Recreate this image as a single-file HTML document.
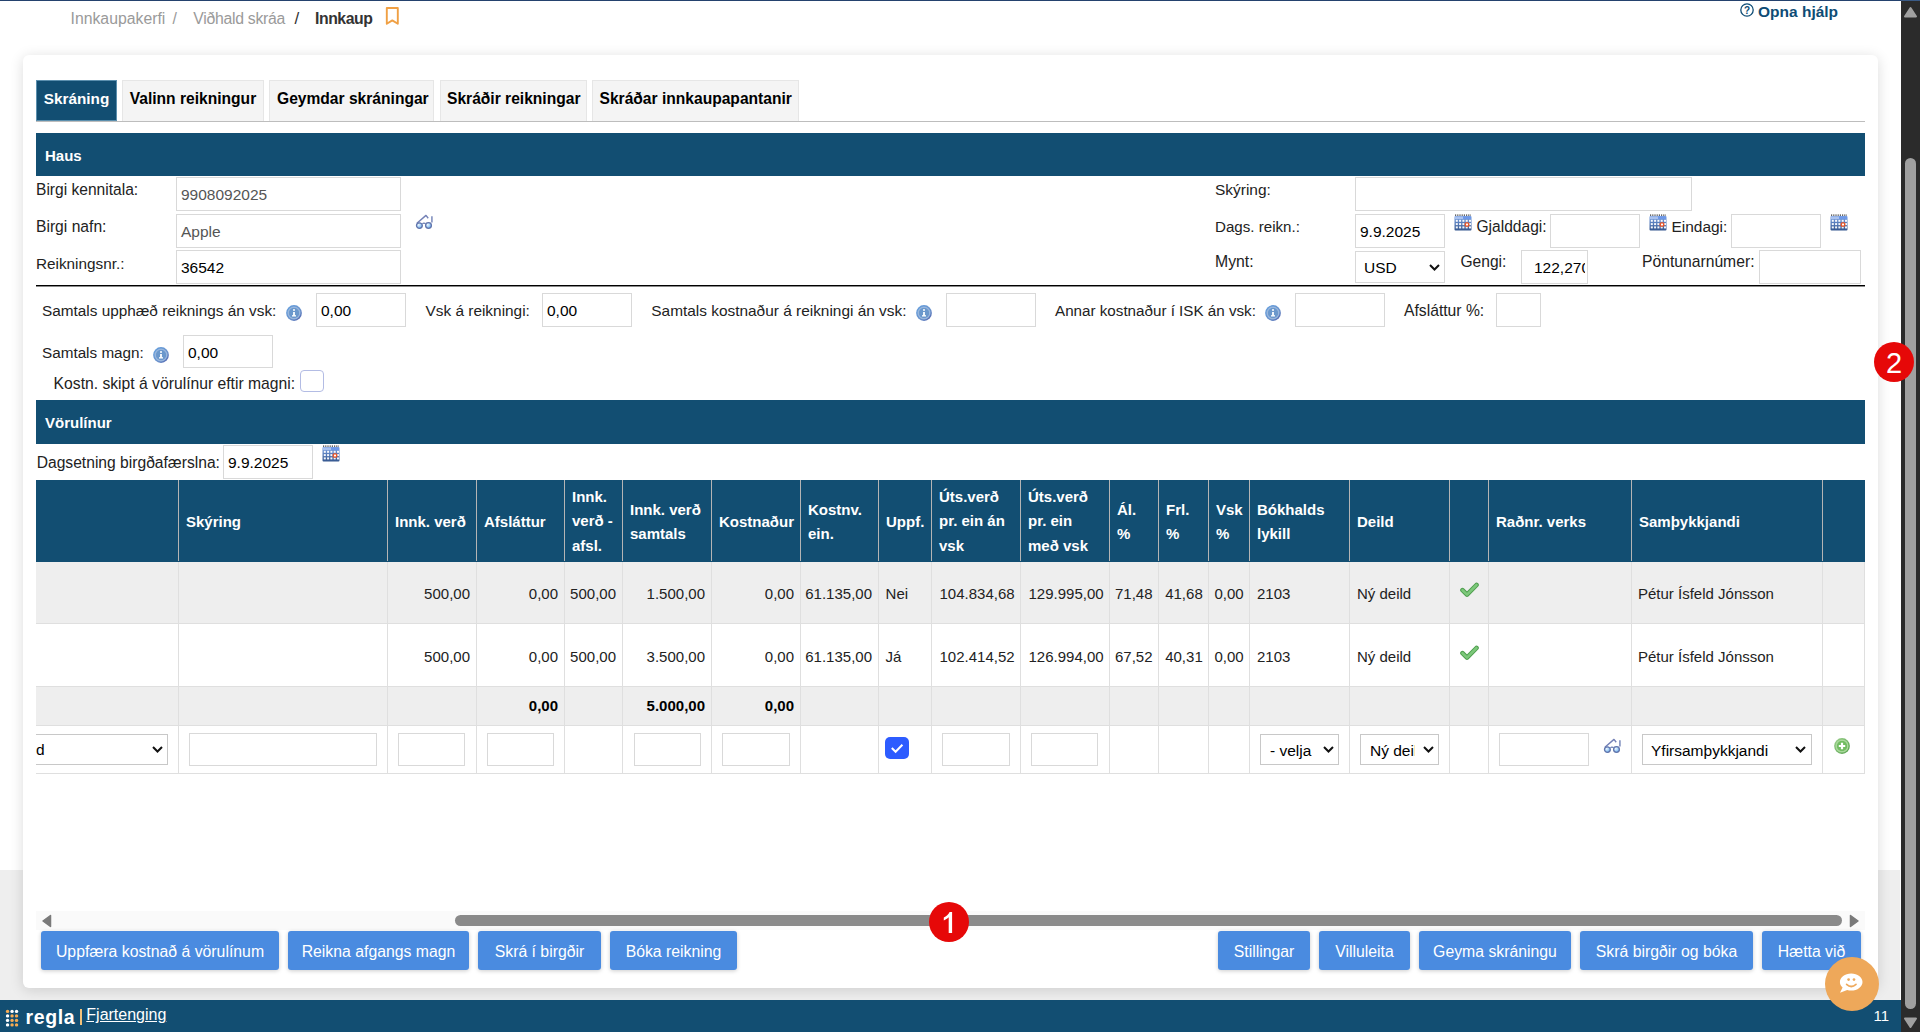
<!DOCTYPE html>
<html><head><meta charset="utf-8"><title>Innkaup</title><style>
html,body{margin:0;padding:0;width:1920px;height:1032px;overflow:hidden;background:#fff;}
body{position:relative;font-family:"Liberation Sans",sans-serif;}
.t{position:absolute;white-space:pre;}
.b{position:absolute;}
.inp{position:absolute;box-sizing:border-box;border:1px solid #d9d9d9;background:#fff;white-space:pre;overflow:hidden;font-family:"Liberation Sans",sans-serif;}
</style></head><body>
<div class="b" style="left:0px;top:870px;width:1900px;height:130px;background:#eeeeee"></div>
<div class="b" style="left:23px;top:55px;width:1855px;height:933px;background:#fff;border-radius:6px;box-shadow:0 2px 14px rgba(0,0,0,0.14)"></div>
<div class="t" style="left:70.5px;top:8.53px;font-size:15.8px;font-weight:400;color:#9a9a9a;line-height:20px;">Innkaupakerfi</div>
<div class="t" style="left:172.5px;top:8.53px;font-size:15.8px;font-weight:400;color:#9a9a9a;line-height:20px;">/</div>
<div class="t" style="left:193.3px;top:8.53px;font-size:15.8px;font-weight:400;color:#9a9a9a;line-height:20px;letter-spacing:-0.28px">Viðhald skráa</div>
<div class="t" style="left:294.5px;top:8.61px;font-size:17px;font-weight:400;color:#333;line-height:20px;">/</div>
<div class="t" style="left:315px;top:8.53px;font-size:15.8px;font-weight:700;color:#333;line-height:20px;letter-spacing:-0.45px">Innkaup</div>
<svg class="b" style="left:384px;top:6px" width="17" height="21" viewBox="0 0 17 21"><path d="M2.8 2 H13.8 V17.8 L8.3 14.4 L2.8 17.8 Z" fill="none" stroke="#f0a044" stroke-width="1.9" stroke-linejoin="round"/></svg>
<svg class="b" style="left:1740px;top:3px" width="15" height="15" viewBox="0 0 15 15"><circle cx="7" cy="7" r="6.2" fill="none" stroke="#0e4c75" stroke-width="1.3"/><text x="7" y="11" text-anchor="middle" font-family="Liberation Sans" font-weight="700" font-size="10" fill="#0e4c75">?</text></svg>
<div class="t" style="left:1758px;top:2.03px;font-size:15.5px;font-weight:700;color:#0e4c75;line-height:20px;">Opna hjálp</div>
<div class="b" style="left:36px;top:121px;width:1829px;height:1px;background:#bdbdbd"></div>
<div class="b" style="left:36px;top:80px;width:81px;height:41px;background:#124e72;border:1px solid #5b8fae;box-sizing:border-box"></div>
<div class="t" style="left:43.8px;top:88.70px;font-size:15.3px;font-weight:700;color:#fff;line-height:20px;">Skráning</div>
<div class="b" style="left:122px;top:80px;width:142px;height:41px;background:#f4f4f4;border:1px solid #e6e6e6;border-bottom:none;box-sizing:border-box"></div>
<div class="t" style="left:129.7px;top:88.59px;font-size:15.6px;font-weight:700;color:#000;line-height:20px;">Valinn reikningur</div>
<div class="b" style="left:269px;top:80px;width:165px;height:41px;background:#f4f4f4;border:1px solid #e6e6e6;border-bottom:none;box-sizing:border-box"></div>
<div class="t" style="left:277px;top:88.59px;font-size:15.6px;font-weight:700;color:#000;line-height:20px;">Geymdar skráningar</div>
<div class="b" style="left:440px;top:80px;width:147px;height:41px;background:#f4f4f4;border:1px solid #e6e6e6;border-bottom:none;box-sizing:border-box"></div>
<div class="t" style="left:447px;top:88.59px;font-size:15.6px;font-weight:700;color:#000;line-height:20px;">Skráðir reikningar</div>
<div class="b" style="left:592px;top:80px;width:207px;height:41px;background:#f4f4f4;border:1px solid #e6e6e6;border-bottom:none;box-sizing:border-box"></div>
<div class="t" style="left:599.5px;top:88.59px;font-size:15.6px;font-weight:700;color:#000;line-height:20px;">Skráðar innkaupapantanir</div>
<div class="b" style="left:36px;top:133px;width:1829px;height:43px;background:#124e72"></div>
<div class="t" style="left:45px;top:145.80px;font-size:15px;font-weight:700;color:#fff;line-height:20px;">Haus</div>
<div class="t" style="left:36px;top:179.60px;font-size:15.59px;font-weight:400;color:#222;line-height:20px;">Birgi kennitala:</div>
<div class="inp" style="left:176px;top:177px;width:225px;height:34px;line-height:34px;font-size:15.5px;color:#555;padding-left:4px;text-align:left;">9908092025</div>
<div class="t" style="left:36px;top:216.58px;font-size:15.65px;font-weight:400;color:#222;line-height:20px;">Birgi nafn:</div>
<div class="inp" style="left:176px;top:214px;width:225px;height:34px;line-height:34px;font-size:15.5px;color:#555;padding-left:4px;text-align:left;">Apple</div>
<div class="t" style="left:36px;top:253.70px;font-size:15.31px;font-weight:400;color:#222;line-height:20px;">Reikningsnr.:</div>
<div class="inp" style="left:176px;top:250px;width:225px;height:34px;line-height:34px;font-size:15.5px;color:#000;padding-left:4px;text-align:left;">36542</div>
<svg class="b" style="left:415px;top:214px" width="19" height="16" viewBox="0 0 19 16"><defs><radialGradient id="lg1" cx="0.35" cy="0.35" r="0.75"><stop offset="0" stop-color="#f0f9ff"/><stop offset="1" stop-color="#5aa6ec"/></radialGradient></defs><path d="M1.9 9.2 L11 1.4 L13.2 4.2" fill="none" stroke="#7380b6" stroke-width="1.4" stroke-linejoin="round"/><path d="M16.9 2.2 V8.6" stroke="#8f9cc6" stroke-width="1.8"/><ellipse cx="4.4" cy="11.6" rx="2.9" ry="2.8" fill="url(#lg1)" stroke="#6275ac" stroke-width="1.3"/><ellipse cx="13.5" cy="11.5" rx="2.9" ry="2.8" fill="url(#lg1)" stroke="#6275ac" stroke-width="1.3"/><path d="M7.3 9.6 Q9 8.6 10.6 9.6" fill="none" stroke="#6275ac" stroke-width="1.1"/></svg>
<div class="t" style="left:1215px;top:180.14px;font-size:15.47px;font-weight:400;color:#222;line-height:20px;">Skýring:</div>
<div class="inp" style="left:1355px;top:177px;width:337px;height:34px;line-height:34px;font-size:15.5px;color:#000;padding-left:4px;text-align:left;"></div>
<div class="t" style="left:1215px;top:216.75px;font-size:15.14px;font-weight:400;color:#222;line-height:20px;">Dags. reikn.:</div>
<div class="inp" style="left:1355px;top:214px;width:90px;height:34px;line-height:34px;font-size:15.5px;color:#000;padding-left:4px;text-align:left;">9.9.2025</div>
<svg class="b" style="left:1454px;top:214px" width="18" height="17" viewBox="0 0 18 17"><defs><linearGradient id="cg1" x1="0" y1="0" x2="0" y2="1"><stop offset="0" stop-color="#7ba3e6"/><stop offset="1" stop-color="#35578f"/></linearGradient></defs><rect x="0.5" y="2" width="17" height="14.5" rx="1" fill="url(#cg1)"/><rect x="1" y="2.5" width="8" height="2.6" fill="#a9c2f0"/><rect x="9" y="2.5" width="8" height="2.6" fill="#6e98e8"/><path d="M1 1.2 H17" stroke="#333" stroke-width="1.2" stroke-dasharray="1.2 1"/><rect x="1.8" y="5.8" width="2" height="2" fill="#fff" opacity="0.95"/><rect x="5.1" y="5.8" width="2" height="2" fill="#fff" opacity="0.95"/><rect x="8.4" y="5.8" width="2" height="2" fill="#fff" opacity="0.95"/><rect x="11.7" y="5.8" width="2" height="2" fill="#fff" opacity="0.95"/><rect x="15.0" y="5.8" width="2" height="2" fill="#fff" opacity="0.95"/><rect x="1.8" y="9.1" width="2" height="2" fill="#fff" opacity="0.95"/><rect x="5.1" y="9.1" width="2" height="2" fill="#fff" opacity="0.95"/><rect x="8.4" y="9.1" width="2" height="2" fill="#fff" opacity="0.95"/><rect x="11.7" y="9.1" width="2" height="2" fill="#fff" opacity="0.95"/><rect x="15.0" y="9.1" width="2" height="2" fill="#fff" opacity="0.95"/><rect x="1.8" y="12.4" width="2" height="2" fill="#fff" opacity="0.95"/><rect x="5.1" y="12.4" width="2" height="2" fill="#fff" opacity="0.95"/><rect x="8.4" y="12.4" width="2" height="2" fill="#fff" opacity="0.95"/><rect x="11.7" y="12.4" width="2" height="2" fill="#fff" opacity="0.95"/><rect x="15.0" y="12.4" width="2" height="2" fill="#fff" opacity="0.95"/><rect x="10.6" y="8.2" width="4.8" height="4.6" rx="1.6" fill="#e8572a"/><rect x="12" y="9.6" width="2" height="1.8" fill="#fff"/></svg>
<div class="t" style="left:1476.5px;top:216.60px;font-size:15.57px;font-weight:400;color:#222;line-height:20px;">Gjalddagi:</div>
<div class="inp" style="left:1550px;top:214px;width:90px;height:34px;line-height:34px;font-size:15.5px;color:#000;padding-left:4px;text-align:left;"></div>
<svg class="b" style="left:1649px;top:214px" width="18" height="17" viewBox="0 0 18 17"><defs><linearGradient id="cg2" x1="0" y1="0" x2="0" y2="1"><stop offset="0" stop-color="#7ba3e6"/><stop offset="1" stop-color="#35578f"/></linearGradient></defs><rect x="0.5" y="2" width="17" height="14.5" rx="1" fill="url(#cg2)"/><rect x="1" y="2.5" width="8" height="2.6" fill="#a9c2f0"/><rect x="9" y="2.5" width="8" height="2.6" fill="#6e98e8"/><path d="M1 1.2 H17" stroke="#333" stroke-width="1.2" stroke-dasharray="1.2 1"/><rect x="1.8" y="5.8" width="2" height="2" fill="#fff" opacity="0.95"/><rect x="5.1" y="5.8" width="2" height="2" fill="#fff" opacity="0.95"/><rect x="8.4" y="5.8" width="2" height="2" fill="#fff" opacity="0.95"/><rect x="11.7" y="5.8" width="2" height="2" fill="#fff" opacity="0.95"/><rect x="15.0" y="5.8" width="2" height="2" fill="#fff" opacity="0.95"/><rect x="1.8" y="9.1" width="2" height="2" fill="#fff" opacity="0.95"/><rect x="5.1" y="9.1" width="2" height="2" fill="#fff" opacity="0.95"/><rect x="8.4" y="9.1" width="2" height="2" fill="#fff" opacity="0.95"/><rect x="11.7" y="9.1" width="2" height="2" fill="#fff" opacity="0.95"/><rect x="15.0" y="9.1" width="2" height="2" fill="#fff" opacity="0.95"/><rect x="1.8" y="12.4" width="2" height="2" fill="#fff" opacity="0.95"/><rect x="5.1" y="12.4" width="2" height="2" fill="#fff" opacity="0.95"/><rect x="8.4" y="12.4" width="2" height="2" fill="#fff" opacity="0.95"/><rect x="11.7" y="12.4" width="2" height="2" fill="#fff" opacity="0.95"/><rect x="15.0" y="12.4" width="2" height="2" fill="#fff" opacity="0.95"/><rect x="10.6" y="8.2" width="4.8" height="4.6" rx="1.6" fill="#e8572a"/><rect x="12" y="9.6" width="2" height="1.8" fill="#fff"/></svg>
<div class="t" style="left:1671.5px;top:216.64px;font-size:15.46px;font-weight:400;color:#222;line-height:20px;">Eindagi:</div>
<div class="inp" style="left:1731px;top:214px;width:90px;height:34px;line-height:34px;font-size:15.5px;color:#000;padding-left:4px;text-align:left;"></div>
<svg class="b" style="left:1829.5px;top:214px" width="18" height="17" viewBox="0 0 18 17"><defs><linearGradient id="cg3" x1="0" y1="0" x2="0" y2="1"><stop offset="0" stop-color="#7ba3e6"/><stop offset="1" stop-color="#35578f"/></linearGradient></defs><rect x="0.5" y="2" width="17" height="14.5" rx="1" fill="url(#cg3)"/><rect x="1" y="2.5" width="8" height="2.6" fill="#a9c2f0"/><rect x="9" y="2.5" width="8" height="2.6" fill="#6e98e8"/><path d="M1 1.2 H17" stroke="#333" stroke-width="1.2" stroke-dasharray="1.2 1"/><rect x="1.8" y="5.8" width="2" height="2" fill="#fff" opacity="0.95"/><rect x="5.1" y="5.8" width="2" height="2" fill="#fff" opacity="0.95"/><rect x="8.4" y="5.8" width="2" height="2" fill="#fff" opacity="0.95"/><rect x="11.7" y="5.8" width="2" height="2" fill="#fff" opacity="0.95"/><rect x="15.0" y="5.8" width="2" height="2" fill="#fff" opacity="0.95"/><rect x="1.8" y="9.1" width="2" height="2" fill="#fff" opacity="0.95"/><rect x="5.1" y="9.1" width="2" height="2" fill="#fff" opacity="0.95"/><rect x="8.4" y="9.1" width="2" height="2" fill="#fff" opacity="0.95"/><rect x="11.7" y="9.1" width="2" height="2" fill="#fff" opacity="0.95"/><rect x="15.0" y="9.1" width="2" height="2" fill="#fff" opacity="0.95"/><rect x="1.8" y="12.4" width="2" height="2" fill="#fff" opacity="0.95"/><rect x="5.1" y="12.4" width="2" height="2" fill="#fff" opacity="0.95"/><rect x="8.4" y="12.4" width="2" height="2" fill="#fff" opacity="0.95"/><rect x="11.7" y="12.4" width="2" height="2" fill="#fff" opacity="0.95"/><rect x="15.0" y="12.4" width="2" height="2" fill="#fff" opacity="0.95"/><rect x="10.6" y="8.2" width="4.8" height="4.6" rx="1.6" fill="#e8572a"/><rect x="12" y="9.6" width="2" height="1.8" fill="#fff"/></svg>
<div class="t" style="left:1215px;top:252.03px;font-size:15.8px;font-weight:400;color:#222;line-height:20px;">Mynt:</div>
<div class="inp" style="left:1355px;top:251px;width:90px;height:32px;line-height:32px;font-size:15.5px;color:#000;padding-left:8px;">USD</div>
<svg class="b" style="left:1429px;top:264px" width="11" height="7" viewBox="0 0 11 7"><path d="M1 1 L5.5 5.5 L10 1" fill="none" stroke="#111" stroke-width="2"/></svg>
<div class="t" style="left:1460.5px;top:252.10px;font-size:15.58px;font-weight:400;color:#222;line-height:20px;">Gengi:</div>
<div class="inp" style="left:1521px;top:250px;width:67px;height:34px;line-height:34px;font-size:15.5px;color:#000;padding-left:12px;"><span style="display:inline-block;width:51px;overflow:hidden;vertical-align:top">122,270</span></div>
<div class="t" style="left:1642px;top:252.06px;font-size:15.69px;font-weight:400;color:#222;line-height:20px;">Pöntunarnúmer:</div>
<div class="inp" style="left:1759px;top:250px;width:102px;height:34px;line-height:34px;font-size:15.5px;color:#000;padding-left:4px;text-align:left;"></div>
<div class="b" style="left:36px;top:285px;width:1829px;height:1px;background:#000"></div>
<div class="b" style="left:36px;top:286px;width:1829px;height:1px;background:#8a8a8a"></div>
<div class="t" style="left:42px;top:301.18px;font-size:15.34px;font-weight:400;color:#222;line-height:20px;">Samtals upphæð reiknings án vsk:</div>
<svg class="b" style="left:286px;top:305px" width="16" height="16" viewBox="0 0 16 16"><defs><linearGradient id="ig1" x1="0" y1="0" x2="1" y2="1"><stop offset="0" stop-color="#62a0e0"/><stop offset="0.6" stop-color="#6a92cc"/><stop offset="1" stop-color="#4a5aa8"/></linearGradient></defs><circle cx="8" cy="8" r="7.9" fill="url(#ig1)"/><circle cx="8" cy="8" r="5.7" fill="none" stroke="#98b6dc" stroke-width="1.6"/><circle cx="8" cy="8" r="4.9" fill="#6b98cc"/><circle cx="8" cy="5" r="1" fill="#fff"/><rect x="7.1" y="7" width="1.8" height="3.8" fill="#fff"/><rect x="6" y="10.2" width="4" height="1.3" fill="#fff"/></svg>
<div class="inp" style="left:316px;top:293px;width:90px;height:34px;line-height:34px;font-size:15.5px;color:#000;padding-left:4px;text-align:left;">0,00</div>
<div class="t" style="left:425.5px;top:301.16px;font-size:15.4px;font-weight:400;color:#222;line-height:20px;">Vsk á reikningi:</div>
<div class="inp" style="left:542px;top:293px;width:90px;height:34px;line-height:34px;font-size:15.5px;color:#000;padding-left:4px;text-align:left;">0,00</div>
<div class="t" style="left:651.3px;top:301.16px;font-size:15.41px;font-weight:400;color:#222;line-height:20px;">Samtals kostnaður á reikningi án vsk:</div>
<svg class="b" style="left:916px;top:305px" width="16" height="16" viewBox="0 0 16 16"><defs><linearGradient id="ig2" x1="0" y1="0" x2="1" y2="1"><stop offset="0" stop-color="#62a0e0"/><stop offset="0.6" stop-color="#6a92cc"/><stop offset="1" stop-color="#4a5aa8"/></linearGradient></defs><circle cx="8" cy="8" r="7.9" fill="url(#ig2)"/><circle cx="8" cy="8" r="5.7" fill="none" stroke="#98b6dc" stroke-width="1.6"/><circle cx="8" cy="8" r="4.9" fill="#6b98cc"/><circle cx="8" cy="5" r="1" fill="#fff"/><rect x="7.1" y="7" width="1.8" height="3.8" fill="#fff"/><rect x="6" y="10.2" width="4" height="1.3" fill="#fff"/></svg>
<div class="inp" style="left:946px;top:293px;width:90px;height:34px;line-height:34px;font-size:15.5px;color:#000;padding-left:4px;text-align:left;"></div>
<div class="t" style="left:1055px;top:301.24px;font-size:15.19px;font-weight:400;color:#222;line-height:20px;">Annar kostnaður í ISK án vsk:</div>
<svg class="b" style="left:1265px;top:305px" width="16" height="16" viewBox="0 0 16 16"><defs><linearGradient id="ig3" x1="0" y1="0" x2="1" y2="1"><stop offset="0" stop-color="#62a0e0"/><stop offset="0.6" stop-color="#6a92cc"/><stop offset="1" stop-color="#4a5aa8"/></linearGradient></defs><circle cx="8" cy="8" r="7.9" fill="url(#ig3)"/><circle cx="8" cy="8" r="5.7" fill="none" stroke="#98b6dc" stroke-width="1.6"/><circle cx="8" cy="8" r="4.9" fill="#6b98cc"/><circle cx="8" cy="5" r="1" fill="#fff"/><rect x="7.1" y="7" width="1.8" height="3.8" fill="#fff"/><rect x="6" y="10.2" width="4" height="1.3" fill="#fff"/></svg>
<div class="inp" style="left:1295px;top:293px;width:90px;height:34px;line-height:34px;font-size:15.5px;color:#000;padding-left:4px;text-align:left;"></div>
<div class="t" style="left:1404px;top:301.06px;font-size:15.7px;font-weight:400;color:#222;line-height:20px;">Afsláttur %:</div>
<div class="inp" style="left:1496px;top:293px;width:45px;height:34px;line-height:34px;font-size:15.5px;color:#000;padding-left:4px;text-align:left;"></div>
<div class="t" style="left:42px;top:342.71px;font-size:15.28px;font-weight:400;color:#222;line-height:20px;">Samtals magn:</div>
<svg class="b" style="left:153px;top:347px" width="16" height="16" viewBox="0 0 16 16"><defs><linearGradient id="ig4" x1="0" y1="0" x2="1" y2="1"><stop offset="0" stop-color="#62a0e0"/><stop offset="0.6" stop-color="#6a92cc"/><stop offset="1" stop-color="#4a5aa8"/></linearGradient></defs><circle cx="8" cy="8" r="7.9" fill="url(#ig4)"/><circle cx="8" cy="8" r="5.7" fill="none" stroke="#98b6dc" stroke-width="1.6"/><circle cx="8" cy="8" r="4.9" fill="#6b98cc"/><circle cx="8" cy="5" r="1" fill="#fff"/><rect x="7.1" y="7" width="1.8" height="3.8" fill="#fff"/><rect x="6" y="10.2" width="4" height="1.3" fill="#fff"/></svg>
<div class="inp" style="left:183px;top:335px;width:90px;height:33px;line-height:33px;font-size:15.5px;color:#000;padding-left:4px;text-align:left;">0,00</div>
<div class="t" style="left:53.6px;top:373.56px;font-size:15.7px;font-weight:400;color:#222;line-height:20px;">Kostn. skipt á vörulínur eftir magni:</div>
<div class="b" style="left:300px;top:370px;width:24px;height:22px;border:1px solid #b3bce4;border-radius:4px;box-sizing:border-box;background:#fff"></div>
<div class="b" style="left:36px;top:400px;width:1829px;height:43.5px;background:#124e72"></div>
<div class="t" style="left:45px;top:412.80px;font-size:15px;font-weight:700;color:#fff;line-height:20px;">Vörulínur</div>
<div class="t" style="left:36.7px;top:452.88px;font-size:15.63px;font-weight:400;color:#222;line-height:20px;">Dagsetning birgðafærslna:</div>
<div class="inp" style="left:223px;top:445px;width:90px;height:34px;line-height:34px;font-size:15.5px;color:#000;padding-left:4px;text-align:left;">9.9.2025</div>
<svg class="b" style="left:322px;top:445px" width="18" height="17" viewBox="0 0 18 17"><defs><linearGradient id="cg4" x1="0" y1="0" x2="0" y2="1"><stop offset="0" stop-color="#7ba3e6"/><stop offset="1" stop-color="#35578f"/></linearGradient></defs><rect x="0.5" y="2" width="17" height="14.5" rx="1" fill="url(#cg4)"/><rect x="1" y="2.5" width="8" height="2.6" fill="#a9c2f0"/><rect x="9" y="2.5" width="8" height="2.6" fill="#6e98e8"/><path d="M1 1.2 H17" stroke="#333" stroke-width="1.2" stroke-dasharray="1.2 1"/><rect x="1.8" y="5.8" width="2" height="2" fill="#fff" opacity="0.95"/><rect x="5.1" y="5.8" width="2" height="2" fill="#fff" opacity="0.95"/><rect x="8.4" y="5.8" width="2" height="2" fill="#fff" opacity="0.95"/><rect x="11.7" y="5.8" width="2" height="2" fill="#fff" opacity="0.95"/><rect x="15.0" y="5.8" width="2" height="2" fill="#fff" opacity="0.95"/><rect x="1.8" y="9.1" width="2" height="2" fill="#fff" opacity="0.95"/><rect x="5.1" y="9.1" width="2" height="2" fill="#fff" opacity="0.95"/><rect x="8.4" y="9.1" width="2" height="2" fill="#fff" opacity="0.95"/><rect x="11.7" y="9.1" width="2" height="2" fill="#fff" opacity="0.95"/><rect x="15.0" y="9.1" width="2" height="2" fill="#fff" opacity="0.95"/><rect x="1.8" y="12.4" width="2" height="2" fill="#fff" opacity="0.95"/><rect x="5.1" y="12.4" width="2" height="2" fill="#fff" opacity="0.95"/><rect x="8.4" y="12.4" width="2" height="2" fill="#fff" opacity="0.95"/><rect x="11.7" y="12.4" width="2" height="2" fill="#fff" opacity="0.95"/><rect x="15.0" y="12.4" width="2" height="2" fill="#fff" opacity="0.95"/><rect x="10.6" y="8.2" width="4.8" height="4.6" rx="1.6" fill="#e8572a"/><rect x="12" y="9.6" width="2" height="1.8" fill="#fff"/></svg>
<div class="b" style="left:36px;top:480px;width:1829px;height:82px;background:#124e72"></div>
<div class="b" style="left:36px;top:562px;width:1829px;height:62px;background:#eeeeee"></div>
<div class="b" style="left:36px;top:624px;width:1829px;height:62px;background:#ffffff"></div>
<div class="b" style="left:36px;top:686px;width:1829px;height:40px;background:#eeeeee"></div>
<div class="b" style="left:36px;top:726px;width:1829px;height:47px;background:#ffffff"></div>
<div class="b" style="left:36px;top:623px;width:1829px;height:1px;background:#dfdfdf"></div>
<div class="b" style="left:36px;top:686px;width:1829px;height:1px;background:#dfdfdf"></div>
<div class="b" style="left:36px;top:725px;width:1829px;height:1px;background:#dfdfdf"></div>
<div class="b" style="left:36px;top:773px;width:1829px;height:1px;background:#dfdfdf"></div>
<div class="b" style="left:178px;top:480px;width:1px;height:81px;background:#b4b4b4"></div>
<div class="b" style="left:178px;top:562px;width:1px;height:212px;background:#dfdfdf"></div>
<div class="b" style="left:387px;top:480px;width:1px;height:81px;background:#b4b4b4"></div>
<div class="b" style="left:387px;top:562px;width:1px;height:212px;background:#dfdfdf"></div>
<div class="b" style="left:476px;top:480px;width:1px;height:81px;background:#b4b4b4"></div>
<div class="b" style="left:476px;top:562px;width:1px;height:212px;background:#dfdfdf"></div>
<div class="b" style="left:564px;top:480px;width:1px;height:81px;background:#b4b4b4"></div>
<div class="b" style="left:564px;top:562px;width:1px;height:212px;background:#dfdfdf"></div>
<div class="b" style="left:622px;top:480px;width:1px;height:81px;background:#b4b4b4"></div>
<div class="b" style="left:622px;top:562px;width:1px;height:212px;background:#dfdfdf"></div>
<div class="b" style="left:711px;top:480px;width:1px;height:81px;background:#b4b4b4"></div>
<div class="b" style="left:711px;top:562px;width:1px;height:212px;background:#dfdfdf"></div>
<div class="b" style="left:800px;top:480px;width:1px;height:81px;background:#b4b4b4"></div>
<div class="b" style="left:800px;top:562px;width:1px;height:212px;background:#dfdfdf"></div>
<div class="b" style="left:878px;top:480px;width:1px;height:81px;background:#b4b4b4"></div>
<div class="b" style="left:878px;top:562px;width:1px;height:212px;background:#dfdfdf"></div>
<div class="b" style="left:931px;top:480px;width:1px;height:81px;background:#b4b4b4"></div>
<div class="b" style="left:931px;top:562px;width:1px;height:212px;background:#dfdfdf"></div>
<div class="b" style="left:1020px;top:480px;width:1px;height:81px;background:#b4b4b4"></div>
<div class="b" style="left:1020px;top:562px;width:1px;height:212px;background:#dfdfdf"></div>
<div class="b" style="left:1109px;top:480px;width:1px;height:81px;background:#b4b4b4"></div>
<div class="b" style="left:1109px;top:562px;width:1px;height:212px;background:#dfdfdf"></div>
<div class="b" style="left:1158px;top:480px;width:1px;height:81px;background:#b4b4b4"></div>
<div class="b" style="left:1158px;top:562px;width:1px;height:212px;background:#dfdfdf"></div>
<div class="b" style="left:1208px;top:480px;width:1px;height:81px;background:#b4b4b4"></div>
<div class="b" style="left:1208px;top:562px;width:1px;height:212px;background:#dfdfdf"></div>
<div class="b" style="left:1249px;top:480px;width:1px;height:81px;background:#b4b4b4"></div>
<div class="b" style="left:1249px;top:562px;width:1px;height:212px;background:#dfdfdf"></div>
<div class="b" style="left:1349px;top:480px;width:1px;height:81px;background:#b4b4b4"></div>
<div class="b" style="left:1349px;top:562px;width:1px;height:212px;background:#dfdfdf"></div>
<div class="b" style="left:1449px;top:480px;width:1px;height:81px;background:#b4b4b4"></div>
<div class="b" style="left:1449px;top:562px;width:1px;height:212px;background:#dfdfdf"></div>
<div class="b" style="left:1488px;top:480px;width:1px;height:81px;background:#b4b4b4"></div>
<div class="b" style="left:1488px;top:562px;width:1px;height:212px;background:#dfdfdf"></div>
<div class="b" style="left:1631px;top:480px;width:1px;height:81px;background:#b4b4b4"></div>
<div class="b" style="left:1631px;top:562px;width:1px;height:212px;background:#dfdfdf"></div>
<div class="b" style="left:1822px;top:480px;width:1px;height:81px;background:#b4b4b4"></div>
<div class="b" style="left:1822px;top:562px;width:1px;height:212px;background:#dfdfdf"></div>
<div class="b" style="left:1864px;top:562px;width:1px;height:212px;background:#dfdfdf"></div>
<div class="t" style="left:186px;top:511.70px;font-size:15px;font-weight:700;color:#fff;line-height:20px;">Skýring</div>
<div class="t" style="left:395px;top:511.70px;font-size:15px;font-weight:700;color:#fff;line-height:20px;">Innk. verð</div>
<div class="t" style="left:484px;top:511.70px;font-size:15px;font-weight:700;color:#fff;line-height:20px;">Afsláttur</div>
<div class="t" style="left:572px;top:486.60px;font-size:15px;font-weight:700;color:#fff;line-height:20px;">Innk.</div>
<div class="t" style="left:572px;top:511.30px;font-size:15px;font-weight:700;color:#fff;line-height:20px;">verð -</div>
<div class="t" style="left:572px;top:535.70px;font-size:15px;font-weight:700;color:#fff;line-height:20px;">afsl.</div>
<div class="t" style="left:630px;top:499.50px;font-size:15px;font-weight:700;color:#fff;line-height:20px;">Innk. verð</div>
<div class="t" style="left:630px;top:524.20px;font-size:15px;font-weight:700;color:#fff;line-height:20px;">samtals</div>
<div class="t" style="left:719px;top:511.70px;font-size:15px;font-weight:700;color:#fff;line-height:20px;">Kostnaður</div>
<div class="t" style="left:808px;top:499.50px;font-size:15px;font-weight:700;color:#fff;line-height:20px;">Kostnv.</div>
<div class="t" style="left:808px;top:524.20px;font-size:15px;font-weight:700;color:#fff;line-height:20px;">ein.</div>
<div class="t" style="left:886px;top:511.70px;font-size:15px;font-weight:700;color:#fff;line-height:20px;">Uppf.</div>
<div class="t" style="left:939px;top:486.60px;font-size:15px;font-weight:700;color:#fff;line-height:20px;">Úts.verð</div>
<div class="t" style="left:939px;top:511.30px;font-size:15px;font-weight:700;color:#fff;line-height:20px;">pr. ein án</div>
<div class="t" style="left:939px;top:535.70px;font-size:15px;font-weight:700;color:#fff;line-height:20px;">vsk</div>
<div class="t" style="left:1028px;top:486.60px;font-size:15px;font-weight:700;color:#fff;line-height:20px;">Úts.verð</div>
<div class="t" style="left:1028px;top:511.30px;font-size:15px;font-weight:700;color:#fff;line-height:20px;">pr. ein</div>
<div class="t" style="left:1028px;top:535.70px;font-size:15px;font-weight:700;color:#fff;line-height:20px;">með vsk</div>
<div class="t" style="left:1117px;top:499.50px;font-size:15px;font-weight:700;color:#fff;line-height:20px;">Ál.</div>
<div class="t" style="left:1117px;top:524.20px;font-size:15px;font-weight:700;color:#fff;line-height:20px;">%</div>
<div class="t" style="left:1166px;top:499.50px;font-size:15px;font-weight:700;color:#fff;line-height:20px;">Frl.</div>
<div class="t" style="left:1166px;top:524.20px;font-size:15px;font-weight:700;color:#fff;line-height:20px;">%</div>
<div class="t" style="left:1216px;top:499.50px;font-size:15px;font-weight:700;color:#fff;line-height:20px;">Vsk</div>
<div class="t" style="left:1216px;top:524.20px;font-size:15px;font-weight:700;color:#fff;line-height:20px;">%</div>
<div class="t" style="left:1257px;top:499.50px;font-size:15px;font-weight:700;color:#fff;line-height:20px;">Bókhalds</div>
<div class="t" style="left:1257px;top:524.20px;font-size:15px;font-weight:700;color:#fff;line-height:20px;">lykill</div>
<div class="t" style="left:1357px;top:511.70px;font-size:15px;font-weight:700;color:#fff;line-height:20px;">Deild</div>
<div class="t" style="left:1496px;top:511.70px;font-size:15px;font-weight:700;color:#fff;line-height:20px;">Raðnr. verks</div>
<div class="t" style="left:1639px;top:511.70px;font-size:15px;font-weight:700;color:#fff;line-height:20px;">Samþykkjandi</div>
<div class="t" style="left:270px;width:200px;text-align:right;top:583.80px;font-size:15px;font-weight:400;color:#222;line-height:20px">500,00</div>
<div class="t" style="left:358px;width:200px;text-align:right;top:583.80px;font-size:15px;font-weight:400;color:#222;line-height:20px">0,00</div>
<div class="t" style="left:416px;width:200px;text-align:right;top:583.80px;font-size:15px;font-weight:400;color:#222;line-height:20px">500,00</div>
<div class="t" style="left:505px;width:200px;text-align:right;top:583.80px;font-size:15px;font-weight:400;color:#222;line-height:20px">1.500,00</div>
<div class="t" style="left:594px;width:200px;text-align:right;top:583.80px;font-size:15px;font-weight:400;color:#222;line-height:20px">0,00</div>
<div class="t" style="left:672px;width:200px;text-align:right;top:583.80px;font-size:15px;font-weight:400;color:#222;line-height:20px">61.135,00</div>
<div class="t" style="left:885.6px;top:583.80px;font-size:15px;font-weight:400;color:#222;line-height:20px;">Nei</div>
<div class="t" style="left:939.5px;top:583.80px;font-size:15px;font-weight:400;color:#222;line-height:20px;">104.834,68</div>
<div class="t" style="left:1028.5px;top:583.80px;font-size:15px;font-weight:400;color:#222;line-height:20px;">129.995,00</div>
<div class="t" style="left:1115px;top:583.80px;font-size:15px;font-weight:400;color:#222;line-height:20px;">71,48</div>
<div class="t" style="left:1165.2px;top:583.80px;font-size:15px;font-weight:400;color:#222;line-height:20px;">41,68</div>
<div class="t" style="left:1214.4px;top:583.80px;font-size:15px;font-weight:400;color:#222;line-height:20px;">0,00</div>
<div class="t" style="left:1257px;top:583.80px;font-size:15px;font-weight:400;color:#222;line-height:20px;">2103</div>
<div class="t" style="left:1357px;top:583.80px;font-size:15px;font-weight:400;color:#222;line-height:20px;">Ný deild</div>
<div class="t" style="left:1638px;top:583.80px;font-size:15px;font-weight:400;color:#222;line-height:20px;">Pétur Ísfeld Jónsson</div>
<div class="t" style="left:270px;width:200px;text-align:right;top:646.80px;font-size:15px;font-weight:400;color:#222;line-height:20px">500,00</div>
<div class="t" style="left:358px;width:200px;text-align:right;top:646.80px;font-size:15px;font-weight:400;color:#222;line-height:20px">0,00</div>
<div class="t" style="left:416px;width:200px;text-align:right;top:646.80px;font-size:15px;font-weight:400;color:#222;line-height:20px">500,00</div>
<div class="t" style="left:505px;width:200px;text-align:right;top:646.80px;font-size:15px;font-weight:400;color:#222;line-height:20px">3.500,00</div>
<div class="t" style="left:594px;width:200px;text-align:right;top:646.80px;font-size:15px;font-weight:400;color:#222;line-height:20px">0,00</div>
<div class="t" style="left:672px;width:200px;text-align:right;top:646.80px;font-size:15px;font-weight:400;color:#222;line-height:20px">61.135,00</div>
<div class="t" style="left:885.6px;top:646.80px;font-size:15px;font-weight:400;color:#222;line-height:20px;">Já</div>
<div class="t" style="left:939.5px;top:646.80px;font-size:15px;font-weight:400;color:#222;line-height:20px;">102.414,52</div>
<div class="t" style="left:1028.5px;top:646.80px;font-size:15px;font-weight:400;color:#222;line-height:20px;">126.994,00</div>
<div class="t" style="left:1115px;top:646.80px;font-size:15px;font-weight:400;color:#222;line-height:20px;">67,52</div>
<div class="t" style="left:1165.2px;top:646.80px;font-size:15px;font-weight:400;color:#222;line-height:20px;">40,31</div>
<div class="t" style="left:1214.4px;top:646.80px;font-size:15px;font-weight:400;color:#222;line-height:20px;">0,00</div>
<div class="t" style="left:1257px;top:646.80px;font-size:15px;font-weight:400;color:#222;line-height:20px;">2103</div>
<div class="t" style="left:1357px;top:646.80px;font-size:15px;font-weight:400;color:#222;line-height:20px;">Ný deild</div>
<div class="t" style="left:1638px;top:646.80px;font-size:15px;font-weight:400;color:#222;line-height:20px;">Pétur Ísfeld Jónsson</div>
<svg class="b" style="left:1459.5px;top:582px" width="19" height="16" viewBox="0 0 19 16"><path d="M2.5 8.2 L7 12.6 L16.5 3" fill="none" stroke="#4f9e4f" stroke-width="4.6" stroke-linecap="round" stroke-linejoin="round"/><path d="M2.5 8.2 L7 12.6 L16.5 3" fill="none" stroke="#7cc87a" stroke-width="2.6" stroke-linecap="round" stroke-linejoin="round"/></svg>
<svg class="b" style="left:1459.5px;top:644.5px" width="19" height="16" viewBox="0 0 19 16"><path d="M2.5 8.2 L7 12.6 L16.5 3" fill="none" stroke="#4f9e4f" stroke-width="4.6" stroke-linecap="round" stroke-linejoin="round"/><path d="M2.5 8.2 L7 12.6 L16.5 3" fill="none" stroke="#7cc87a" stroke-width="2.6" stroke-linecap="round" stroke-linejoin="round"/></svg>
<div class="t" style="left:358px;width:200px;text-align:right;top:696.30px;font-size:15px;font-weight:700;color:#000;line-height:20px">0,00</div>
<div class="t" style="left:505px;width:200px;text-align:right;top:696.30px;font-size:15px;font-weight:700;color:#000;line-height:20px">5.000,00</div>
<div class="t" style="left:594px;width:200px;text-align:right;top:696.30px;font-size:15px;font-weight:700;color:#000;line-height:20px">0,00</div>
<div class="b" style="left:36px;top:734px;width:132px;height:31px;box-sizing:border-box;border:1px solid #c8c8c8;border-left:none;background:#fff;font-size:15.5px;line-height:29px;color:#000;padding-left:0px">d</div>
<svg class="b" style="left:152px;top:746px" width="11" height="7" viewBox="0 0 11 7"><path d="M1 1 L5.5 5.5 L10 1" fill="none" stroke="#111" stroke-width="2"/></svg>
<div class="inp" style="left:189px;top:733px;width:188px;height:33px;line-height:33px;font-size:15.5px;color:#000;padding-left:4px;text-align:left;"></div>
<div class="inp" style="left:398px;top:733px;width:67px;height:33px;line-height:33px;font-size:15.5px;color:#000;padding-left:4px;text-align:left;"></div>
<div class="inp" style="left:487px;top:733px;width:67px;height:33px;line-height:33px;font-size:15.5px;color:#000;padding-left:4px;text-align:left;"></div>
<div class="inp" style="left:634px;top:733px;width:67px;height:33px;line-height:33px;font-size:15.5px;color:#000;padding-left:4px;text-align:left;"></div>
<div class="inp" style="left:722px;top:733px;width:68px;height:33px;line-height:33px;font-size:15.5px;color:#000;padding-left:4px;text-align:left;"></div>
<div class="inp" style="left:942px;top:733px;width:68px;height:33px;line-height:33px;font-size:15.5px;color:#000;padding-left:4px;text-align:left;"></div>
<div class="inp" style="left:1031px;top:733px;width:67px;height:33px;line-height:33px;font-size:15.5px;color:#000;padding-left:4px;text-align:left;"></div>
<div class="inp" style="left:1499px;top:733px;width:90px;height:33px;line-height:33px;font-size:15.5px;color:#000;padding-left:4px;text-align:left;"></div>
<div class="b" style="left:885px;top:737px;width:24px;height:22px;background:#2d5cff;border-radius:5px"></div>
<svg class="b" style="left:885px;top:737px" width="24" height="22" viewBox="0 0 24 22"><path d="M6.8 11 L10.6 14.8 L17.4 7.8" fill="none" stroke="#fff" stroke-width="2"/></svg>
<div class="inp" style="left:1260px;top:734px;width:79px;height:31px;line-height:31px;font-size:15.5px;padding-left:9px;border-color:#c8c8c8;color:#000">- velja</div>
<svg class="b" style="left:1323px;top:746px" width="11" height="7" viewBox="0 0 11 7"><path d="M1 1 L5.5 5.5 L10 1" fill="none" stroke="#111" stroke-width="2"/></svg>
<div class="inp" style="left:1360px;top:734px;width:79px;height:31px;line-height:31px;font-size:15.5px;padding-left:9px;border-color:#c8c8c8;color:#000"><span style="display:inline-block;width:45px;overflow:hidden;vertical-align:top">Ný deild</span></div>
<svg class="b" style="left:1423px;top:746px" width="11" height="7" viewBox="0 0 11 7"><path d="M1 1 L5.5 5.5 L10 1" fill="none" stroke="#111" stroke-width="2"/></svg>
<svg class="b" style="left:1603px;top:738px" width="19" height="16" viewBox="0 0 19 16"><defs><radialGradient id="lg2" cx="0.35" cy="0.35" r="0.75"><stop offset="0" stop-color="#f0f9ff"/><stop offset="1" stop-color="#5aa6ec"/></radialGradient></defs><path d="M1.9 9.2 L11 1.4 L13.2 4.2" fill="none" stroke="#7380b6" stroke-width="1.4" stroke-linejoin="round"/><path d="M16.9 2.2 V8.6" stroke="#8f9cc6" stroke-width="1.8"/><ellipse cx="4.4" cy="11.6" rx="2.9" ry="2.8" fill="url(#lg2)" stroke="#6275ac" stroke-width="1.3"/><ellipse cx="13.5" cy="11.5" rx="2.9" ry="2.8" fill="url(#lg2)" stroke="#6275ac" stroke-width="1.3"/><path d="M7.3 9.6 Q9 8.6 10.6 9.6" fill="none" stroke="#6275ac" stroke-width="1.1"/></svg>
<div class="inp" style="left:1642px;top:734px;width:170px;height:31px;line-height:31px;font-size:15.5px;padding-left:8px;border-color:#c8c8c8;color:#000">Yfirsamþykkjandi</div>
<svg class="b" style="left:1795px;top:746px" width="11" height="7" viewBox="0 0 11 7"><path d="M1 1 L5.5 5.5 L10 1" fill="none" stroke="#111" stroke-width="2"/></svg>
<svg class="b" style="left:1833px;top:737px" width="18" height="18" viewBox="0 0 18 18"><defs><linearGradient id="pg" x1="0" y1="0" x2="1" y2="1"><stop offset="0" stop-color="#9ed28e"/><stop offset="1" stop-color="#4f9c48"/></linearGradient></defs><circle cx="9" cy="9" r="7.9" fill="url(#pg)"/><circle cx="9" cy="9" r="5.8" fill="none" stroke="#a8d89a" stroke-width="1.5"/><circle cx="9" cy="9" r="5" fill="#72bd62"/><path d="M9 5.8 V12.2 M5.8 9 H12.2" stroke="#fff" stroke-width="2.2"/></svg>
<div class="b" style="left:36px;top:911px;width:1829px;height:19px;background:#fafafa"></div>
<svg class="b" style="left:41px;top:914px" width="11" height="14" viewBox="0 0 11 14"><path d="M2 7 L9.5 1.5 V12.5 Z" fill="#7a7a7a" stroke="#7a7a7a" stroke-width="1.5" stroke-linejoin="round"/></svg>
<svg class="b" style="left:1849px;top:914px" width="11" height="14" viewBox="0 0 11 14"><path d="M9 7 L1.5 1.5 V12.5 Z" fill="#7a7a7a" stroke="#7a7a7a" stroke-width="1.5" stroke-linejoin="round"/></svg>
<div class="b" style="left:454.5px;top:915px;width:1387.5px;height:11px;background:#8a8a8a;border-radius:6px"></div>
<div class="b" style="left:41px;top:931px;width:238px;height:39px;background:#4a8be0;border-radius:3px;box-shadow:0 1px 4px rgba(0,0,0,0.2);color:#fff;font-size:15.8px;line-height:42px;text-align:center;white-space:pre">Uppfæra kostnað á vörulínum</div>
<div class="b" style="left:288px;top:931px;width:181px;height:39px;background:#4a8be0;border-radius:3px;box-shadow:0 1px 4px rgba(0,0,0,0.2);color:#fff;font-size:15.8px;line-height:42px;text-align:center;white-space:pre">Reikna afgangs magn</div>
<div class="b" style="left:478px;top:931px;width:123px;height:39px;background:#4a8be0;border-radius:3px;box-shadow:0 1px 4px rgba(0,0,0,0.2);color:#fff;font-size:15.8px;line-height:42px;text-align:center;white-space:pre">Skrá í birgðir</div>
<div class="b" style="left:610px;top:931px;width:127px;height:39px;background:#4a8be0;border-radius:3px;box-shadow:0 1px 4px rgba(0,0,0,0.2);color:#fff;font-size:15.8px;line-height:42px;text-align:center;white-space:pre">Bóka reikning</div>
<div class="b" style="left:1218px;top:931px;width:92px;height:39px;background:#4a8be0;border-radius:3px;box-shadow:0 1px 4px rgba(0,0,0,0.2);color:#fff;font-size:15.8px;line-height:42px;text-align:center;white-space:pre">Stillingar</div>
<div class="b" style="left:1319px;top:931px;width:91px;height:39px;background:#4a8be0;border-radius:3px;box-shadow:0 1px 4px rgba(0,0,0,0.2);color:#fff;font-size:15.8px;line-height:42px;text-align:center;white-space:pre">Villuleita</div>
<div class="b" style="left:1419px;top:931px;width:152px;height:39px;background:#4a8be0;border-radius:3px;box-shadow:0 1px 4px rgba(0,0,0,0.2);color:#fff;font-size:15.8px;line-height:42px;text-align:center;white-space:pre">Geyma skráningu</div>
<div class="b" style="left:1580px;top:931px;width:173px;height:39px;background:#4a8be0;border-radius:3px;box-shadow:0 1px 4px rgba(0,0,0,0.2);color:#fff;font-size:15.8px;line-height:42px;text-align:center;white-space:pre">Skrá birgðir og bóka</div>
<div class="b" style="left:1762px;top:931px;width:99px;height:39px;background:#4a8be0;border-radius:3px;box-shadow:0 1px 4px rgba(0,0,0,0.2);color:#fff;font-size:15.8px;line-height:42px;text-align:center;white-space:pre">Hætta við</div>
<div class="b" style="left:0px;top:1000px;width:1901px;height:32px;background:#124e72"></div>
<svg class="b" style="left:0px;top:0px;overflow:visible" width="22" height="1032" viewBox="0 0 22 1032"><circle cx="7.56" cy="1011.40" r="1.7" fill="#f7ab52"/><circle cx="12.06" cy="1011.40" r="1.7" fill="#ffffff"/><circle cx="16.56" cy="1011.40" r="1.7" fill="#ffffff"/><circle cx="7.56" cy="1015.90" r="1.7" fill="#ffffff"/><circle cx="12.06" cy="1015.90" r="1.7" fill="#f7ab52"/><circle cx="16.56" cy="1015.90" r="1.7" fill="#f7ab52"/><circle cx="7.56" cy="1020.40" r="1.7" fill="#ffffff"/><circle cx="12.06" cy="1020.40" r="1.7" fill="#f7ab52"/><circle cx="16.56" cy="1020.40" r="1.7" fill="#f7ab52"/><circle cx="7.56" cy="1024.90" r="1.7" fill="#ffffff"/><circle cx="12.06" cy="1024.90" r="1.7" fill="#f7ab52"/><circle cx="16.56" cy="1024.90" r="1.7" fill="#f7ab52"/></svg>
<div class="t" style="left:25.5px;top:1007.24px;font-size:19.5px;font-weight:700;color:#fff;line-height:20px;letter-spacing:0.6px">regla</div>
<div class="b" style="left:80px;top:1009px;width:1.5999999999999943px;height:16px;background:#f2c27a"></div>
<div class="t" style="left:86.3px;top:1005.46px;font-size:16px;font-weight:400;color:#fff;line-height:20px;text-decoration:underline">Fjartenging</div>
<div class="t" style="left:1873.5px;top:1006.30px;font-size:15px;font-weight:400;color:#fff;line-height:20px;">11</div>
<div class="b" style="left:1901px;top:0px;width:19px;height:1032px;background:#2b2b2b"></div>
<svg class="b" style="left:1903px;top:6px" width="15" height="13" viewBox="0 0 15 13"><path d="M7.5 2 L13 10.5 H2 Z" fill="#a0a0a0" stroke="#a0a0a0" stroke-width="2" stroke-linejoin="round"/></svg>
<svg class="b" style="left:1903px;top:1016px" width="15" height="13" viewBox="0 0 15 13"><path d="M7.5 11 L13 2.5 H2 Z" fill="#a0a0a0" stroke="#a0a0a0" stroke-width="2" stroke-linejoin="round"/></svg>
<div class="b" style="left:1905px;top:158px;width:11px;height:851px;background:#a0a0a0;border-radius:6px"></div>
<div class="b" style="left:929px;top:902px;width:40px;height:40px;border-radius:50%;background:#e60808"></div>
<svg class="b" style="left:929px;top:902px" width="40" height="40" viewBox="0 0 40 40"><path d="M19.7 31.1 H23.1 V9.9 H20.6 C19.5 12.2 17.3 14.3 14.8 15.6 V18.4 C16.6 17.7 18.4 16.6 19.7 15.3 Z" fill="#fff"/></svg>
<div class="b" style="left:1874px;top:342px;width:40px;height:40px;border-radius:50%;background:#e60808;color:#fff;font-size:29px;line-height:43px;text-align:center">2</div>
<div class="b" style="left:1825px;top:957px;width:54px;height:54px;border-radius:50%;background:#eea85a"></div>
<svg class="b" style="left:1838px;top:972px" width="28" height="24" viewBox="0 0 28 24"><path d="M13.2 1.4 C19.5 1.4 24.5 5.2 24.5 10 C24.5 14.8 19.5 18.6 13.2 18.6 C11.8 18.6 10.4 18.4 9.2 18 L2 20.8 L4.6 15.4 C2.8 14 1.9 12 1.9 10 C1.9 5.2 6.9 1.4 13.2 1.4 Z" fill="#fff"/><circle cx="10.6" cy="7.6" r="1.35" fill="#eea95c"/><circle cx="16" cy="7.6" r="1.35" fill="#eea95c"/><path d="M8.6 12.4 Q13.3 16.6 18 12.4" fill="none" stroke="#eea95c" stroke-width="1.7" stroke-linecap="round"/></svg>
<div class="b" style="left:0px;top:0px;width:1901px;height:1px;background:#24426e"></div>
<div class="b" style="left:1901px;top:0px;width:19px;height:1px;background:#3a5a85"></div>
</body></html>
